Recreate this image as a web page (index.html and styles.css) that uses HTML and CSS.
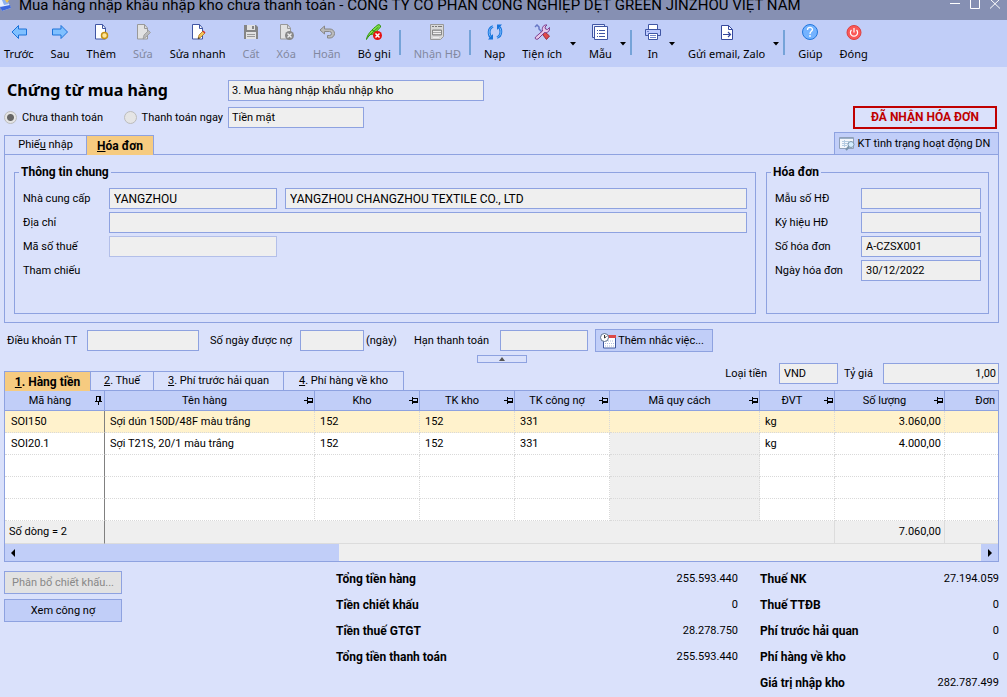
FILE: index.html
```html
<!DOCTYPE html>
<html lang="vi">
<head>
<meta charset="utf-8">
<title>Mua hàng nhập khẩu nhập kho chưa thanh toán</title>
<link rel="stylesheet" href="styles.css">
</head>
<body>
<svg class="defs" width="0" height="0" aria-hidden="true">
  <symbol id="pin" viewBox="0 0 9 9"><path d="M0 4.500h3M3.500 1v7M3.500 2.500h5M8.500 2v5M3.500 5.500h5M3.500 6.500h5" fill="none" stroke="#000"/></symbol>
  <symbol id="pin-down" viewBox="0 0 8 9"><path d="M3.500 6v3M0 5.500h7M1.500 0v5.500M1.500 .500h4M5.500 0v5.500M4.500 0v5.500" fill="none" stroke="#000"/></symbol>
  <symbol id="caret" viewBox="0 0 6 4"><path d="M0 0h6L3 3.500z"/></symbol>
</svg>

<header class="titlebar">
  <svg class="app-icon" width="14" height="12" viewBox="0 0 14 12"><path d="M0 0h7l4 8-9 3-2-5z" fill="#e9f0ff"/><path d="M0 7l2 4 9-3-1-3z" fill="#3e68dd"/><path d="M2 0h5l2 4-5 1z" fill="#8eb0ef"/><path d="M5 0h4l-2 3z" fill="#f0c24c"/></svg>
  <h1 class="window-title">Mua hàng nhập khẩu nhập kho chưa thanh toán - CÔNG TY CỔ PHẦN CÔNG NGHIỆP DỆT GREEN JINZHOU VIỆT NAM</h1>
  <div class="window-buttons">
    <button type="button" aria-label="Thu nhỏ"><svg width="10" height="10" viewBox="0 0 10 10"><path d="M0 3.500h10"/></svg></button>
    <button type="button" aria-label="Phóng to"><svg width="10" height="10" viewBox="0 0 10 10"><path d="M.5 0v8.500h9V0"/></svg></button>
    <button type="button" aria-label="Đóng cửa sổ"><svg width="10" height="10" viewBox="0 0 10 10"><path d="M0 -1l10 9.500M10 -1L0 8.500"/></svg></button>
  </div>
</header>

<nav class="toolbar" aria-label="Công cụ">
  <button type="button" class="tool"><svg width="16" height="16" viewBox="0 0 16 16"><path d="M1 8l6.500-6.500v3.500H15.500v6H7.500v3.500z" fill="#80c0ff" stroke="#1c72d8"/></svg><span>Trước</span></button>
  <button type="button" class="tool"><svg width="16" height="16" viewBox="0 0 16 16"><path d="M15.500 8L9 1.500v3.500H.5v6H9v3.500z" fill="#80c0ff" stroke="#1c72d8"/></svg><span>Sau</span></button>
  <button type="button" class="tool"><svg width="16" height="16" viewBox="0 0 16 16"><path d="M2.500 .500h7l3 3.500v11h-10z" fill="#fff" stroke="#4056a4"/><path d="M9.500 .500v4h3" fill="none" stroke="#4056a4"/><circle cx="11.500" cy="11.500" r="3" fill="#ffe69a" stroke="#c59116" stroke-width="1.500"/></svg><span>Thêm</span></button>
  <button type="button" class="tool" disabled><svg width="16" height="16" viewBox="0 0 16 16"><path d="M2.500 .500h7l3 3.500v11h-10z" fill="#e2e2e2" stroke="#999"/><path d="M9.500 .500v4h3" fill="none" stroke="#999"/><path d="M8 15l1-4 4.500-4.500 2 2L11 13z" fill="#bbb" stroke="#999" stroke-width=".8"/></svg><span>Sửa</span></button>
  <button type="button" class="tool"><svg width="16" height="16" viewBox="0 0 16 16"><path d="M2.500 .500h7l3 3.500v11h-10z" fill="#fff" stroke="#4056a4"/><path d="M9.500 .500v4h3" fill="none" stroke="#4056a4"/><path d="M8 15l1-4 4-4 2 2-4 4z" fill="#f4c65a" stroke="#aa7522" stroke-width=".8"/><path d="M12.500 7.500l1-1 2 2-1 1z" fill="#d32f2f"/><path d="M8 15l.5-2 1.500 1.500z" fill="#333"/></svg><span>Sửa nhanh</span></button>
  <button type="button" class="tool" disabled><svg width="16" height="16" viewBox="0 0 16 16"><path d="M1 1h12l2 2v12H1z" fill="#858585"/><path d="M4 1h8v5H4zM3 8h10v7H3z" fill="#e2e2e2"/><path d="M9 2h2v3H9z" fill="#858585"/><path d="M4 10.500h8M4 12.500h8" stroke="#999"/></svg><span>Cất</span></button>
  <button type="button" class="tool" disabled><svg width="16" height="16" viewBox="0 0 16 16"><path d="M2.500 .500h7l3 3.500v11h-10z" fill="#e2e2e2" stroke="#999"/><path d="M9.500 .500v4h3" fill="none" stroke="#999"/><circle cx="11.500" cy="11.500" r="4.500" fill="#888"/><path d="M9.500 9.500l4 4M13.500 9.500l-4 4" stroke="#eee" stroke-width="1.400"/></svg><span>Xóa</span></button>
  <button type="button" class="tool" disabled><svg width="16" height="16" viewBox="0 0 16 16"><path d="M5.500 2L1 6l4.500 4V7.500h5a2 2 0 0 1 0 4H8.500V14h2.500a4.500 4.500 0 0 0 0-9H5.500z" fill="#bbb" stroke="#888"/></svg><span>Hoãn</span></button>
  <button type="button" class="tool"><svg width="16" height="16" viewBox="0 0 16 16"><path d="M.5 15.500C1 11 5 6 12 .800c1.500-.5 3 .7 2.500 2.200L8 10l-4 .500-3 4z" fill="#83e34c" stroke="#35920f"/><path d="M3 12L12.500 3M6 6l4 2" stroke="#2f8c12" fill="none"/><circle cx="11.500" cy="11.500" r="4.500" fill="#e51313"/><path d="M9.500 9.500l4 4M13.500 9.500l-4 4" stroke="#fff" stroke-width="1.500"/></svg><span>Bỏ ghi</span></button>
  <span class="divider"></span>
  <button type="button" class="tool" disabled><svg width="16" height="16" viewBox="0 0 16 16"><path d="M1.500 .500h13v12l-3 3h-10z" fill="#d8d8d8" stroke="#999"/><path d="M3 2.500h2M6 2.500h2M9 2.500h4" stroke="#777"/><path d="M3.500 6h9v5h-9z" fill="#aaa" stroke="#888"/><path d="M4 7.500h8M4 9.500h8M4 13.500h6" stroke="#eee"/></svg><span>Nhận HĐ</span></button>
  <span class="divider"></span>
  <button type="button" class="tool"><svg width="16" height="16" viewBox="0 0 16 16"><g fill="none" stroke="#1673db" stroke-width="2.800"><path d="M6 2.500C1 4 1 12 5 13.500M10 13.500C15 12 15 4 11 2.500"/></g><g fill="none" stroke="#7ebdff" stroke-width="1"><path d="M6 2.500C1 4 1 12 5 13.500M10 13.500C15 12 15 4 11 2.500"/></g><path d="M6 10v5.500H1zM10 6V.500h5z" fill="#1673db"/></svg><span>Nạp</span></button>
  <button type="button" class="tool"><svg width="16" height="16" viewBox="0 0 16 16"><path d="M1 3l2-2 2 2v2l4 4" fill="none" stroke="#6676c4" stroke-width="1.500"/><path d="M9 9l2-1 4.500 4-3 3.500L9 11z" fill="#e04a4a" stroke="#983040"/><path d="M1.500 13l7-6C7.500 3 10 .5 13 1l-2 2 .5 2 2 .5 2-2c.5 4-2 5.500-5 5L4 15c-2 1-3.500-.5-2.500-2z" fill="#e8c9ea" stroke="#7c3e8e"/></svg><span>Tiện ích</span></button>
  <button type="button" class="drop" aria-label="Thêm tiện ích"><svg width="6" height="4"><use href="#caret"/></svg></button>
  <button type="button" class="tool"><svg width="16" height="16" viewBox="0 0 16 16"><path d="M.5 .500h12v13H.5z" fill="#e9eeff" stroke="#4056a4"/><path d="M2.500 2.500h13v13h-13z" fill="#fff" stroke="#4056a4"/><path d="M5 6.500h1M5 9.500h1M5 12.500h1M7 6.500h6M7 9.500h6M7 12.500h6" stroke="#4056a4"/></svg><span>Mẫu</span></button>
  <button type="button" class="drop" aria-label="Chọn mẫu"><svg width="6" height="4"><use href="#caret"/></svg></button>
  <span class="divider"></span>
  <button type="button" class="tool"><svg width="16" height="16" viewBox="0 0 16 16"><path d="M3.500 .500h9v5h-9z" fill="#fff" stroke="#4056a4"/><path d="M.5 5.500h15v6H.5z" fill="#bdcaff" stroke="#4056a4"/><path d="M3.500 9.500h9v6h-9z" fill="#fff" stroke="#4056a4"/><path d="M5 11.500h6M5 13.500h6M2 7.500h2" stroke="#7386ca"/></svg><span>In</span></button>
  <button type="button" class="drop" aria-label="Tùy chọn in"><svg width="6" height="4"><use href="#caret"/></svg></button>
  <button type="button" class="tool"><svg width="16" height="16" viewBox="0 0 16 16"><path d="M2.500 1.500h7l4 4v10h-11z" fill="#fff" stroke="#35489c"/><path d="M9.500 1.500v4h4" fill="none" stroke="#35489c"/><path d="M4 10.500h8M9 8l2.500 2.500L9 13" fill="none" stroke="#35489c" stroke-width="1.200"/></svg><span>Gửi email, Zalo</span></button>
  <button type="button" class="drop" aria-label="Tùy chọn gửi"><svg width="6" height="4"><use href="#caret"/></svg></button>
  <span class="divider"></span>
  <button type="button" class="tool"><svg width="16" height="16" viewBox="0 0 16 16"><circle cx="8" cy="8" r="7.500" fill="#74b3ff" stroke="#2277dc"/><path d="M5.500 6C5.500 2.500 10.500 2.800 10.500 5.500 10.500 7.300 8 7.500 8 10" fill="none" stroke="#fff" stroke-width="1.300"/><circle cx="8" cy="12" r=".9" fill="#fff"/></svg><span>Giúp</span></button>
  <button type="button" class="tool"><svg width="16" height="16" viewBox="0 0 16 16"><circle cx="8" cy="8.500" r="7" fill="#fa5959" stroke="#dc4141"/><path d="M5.500 6a3.600 3.600 0 1 0 5 0M8 4v4.500" fill="none" stroke="#fff" stroke-width="1.200"/></svg><span>Đóng</span></button>
</nav>

<main class="page">
  <div class="head-row head-type">
    <h2>Chứng từ mua hàng</h2>
    <input class="field type-field" aria-label="Loại chứng từ" value="3. Mua hàng nhập khẩu nhập kho" readonly>
  </div>
  <div class="head-row head-pay">
    <div class="radios">
      <label class="radio"><input type="radio" name="pay" checked disabled>Chưa thanh toán</label>
      <label class="radio"><input type="radio" name="pay" disabled>Thanh toán ngay</label>
    </div>
    <input class="field pay-field" aria-label="Hình thức thanh toán" value="Tiền mặt" readonly>
    <strong class="stamp">ĐÃ NHẬN HÓA ĐƠN</strong>
  </div>

  <div class="panel-head">
    <div class="tabs" role="tablist">
      <button type="button" class="tab tab-receipt" role="tab">Phiế<u>u</u> nhập</button>
      <button type="button" class="tab tab-invoice active" role="tab" aria-selected="true"><u>H</u>óa đơn</button>
    </div>
    <button type="button" class="btn btn-check"><svg width="17" height="15" viewBox="0 0 17 15"><path d="M.5 1.500h14v11H.5z" fill="#f4f7fc" stroke="#8fa0b8"/><path d="M1 2.500h13" stroke="#9cb0c6"/><path d="M3 5.500h7M3 7.500h6M3 9.500h5M5.500 4v7" stroke="#b5cbe2"/><circle cx="12" cy="8.500" r="3" fill="#d3ecff" stroke="#7893ab"/><path d="M10 10.500l-3 3.500" stroke="#7893ab" stroke-width="2"/></svg>KT tình trạng hoạt động DN</button>
  </div>

  <section class="panel">
    <fieldset class="group group-main">
      <legend>Thông tin chung</legend>
      <div class="form form-main">
        <label for="sup">Nhà cung cấp</label>
        <div class="pair"><input class="field name" id="sup" value="YANGZHOU" readonly><input class="field name" aria-label="Tên nhà cung cấp" value="YANGZHOU CHANGZHOU TEXTILE CO., LTD" readonly></div>
        <label for="addr">Địa chỉ</label><input class="field" id="addr" readonly>
        <label for="tax">Mã số thuế</label>
        <div class="pair"><input class="field light" id="tax" readonly></div>
        <span>Tham chiếu</span>
      </div>
    </fieldset>
    <fieldset class="group group-invoice">
      <legend>Hóa đơn</legend>
      <div class="form form-invoice">
        <label for="tpl">Mẫu số HĐ</label><input class="field" id="tpl" readonly>
        <label for="sign">Ký hiệu HĐ</label><input class="field" id="sign" readonly>
        <label for="no">Số hóa đơn</label><input class="field" id="no" value="A-CZSX001" readonly>
        <label for="date">Ngày hóa đơn</label><input class="field" id="date" value="30/12/2022" readonly>
      </div>
    </fieldset>
  </section>

  <div class="terms">
    <label for="term">Điều khoản TT</label><input class="field term-field" id="term" readonly>
    <label for="days" class="days-label">Số ngày được nợ</label><input class="field days-field" id="days" readonly>
    <span class="unit">(ngày)</span>
    <label for="due" class="due-label">Hạn thanh toán</label><input class="field due-field" id="due" readonly>
    <button type="button" class="btn btn-remind"><svg width="16" height="16" viewBox="0 0 16 16"><path d="M3.500 2.500h12v12.500h-12z" fill="#fff" stroke="#3f589f"/><path d="M6 2h10v3H6z" fill="#dc4a4a"/><path d="M6 8h8M5 10.500h9M5 13h9" stroke="#aebce0" stroke-dasharray="1 1"/><circle cx="4.500" cy="4.500" r="4" fill="#fff" stroke="#5b7190"/><path d="M4.500 2v3l2-1.500" fill="none" stroke="#333"/></svg>Thêm nhắc việc...</button>
  </div>
  <button type="button" class="collapse" aria-label="Thu gọn"><svg width="6" height="4" viewBox="0 0 6 4"><path d="M0 4h6L3 0z" fill="#555"/></svg></button>

  <div class="grid-head">
    <div class="tabs" role="tablist">
      <button type="button" class="tab t1 active" role="tab" aria-selected="true"><u>1</u>. Hàng tiền</button>
      <button type="button" class="tab t2" role="tab"><u>2</u>. Thuế</button>
      <button type="button" class="tab t3" role="tab"><u>3</u>. Phí trước hải quan</button>
      <button type="button" class="tab t4" role="tab"><u>4</u>. Phí hàng về kho</button>
    </div>
    <div class="currency">
      <label for="cur">Loại tiền</label><input class="field cur-field" id="cur" value="VND" readonly>
      <label for="rate" class="rate-label">Tỷ giá</label><input class="field rate-field" id="rate" value="1,00" readonly>
    </div>
  </div>

  <div class="grid">
    <table>
      <colgroup><col class="c-code"><col class="c-name"><col class="c-wh"><col class="c-acc"><col class="c-acc"><col class="c-spec"><col class="c-unit"><col class="c-qty"><col></colgroup>
      <thead><tr>
        <th><div><span>Mã hàng</span><svg width="8" height="9"><use href="#pin-down"/></svg></div></th>
        <th><div><span>Tên hàng</span><svg width="9" height="9"><use href="#pin"/></svg></div></th>
        <th><div><span>Kho</span><svg width="9" height="9"><use href="#pin"/></svg></div></th>
        <th><div><span>TK kho</span><svg width="9" height="9"><use href="#pin"/></svg></div></th>
        <th><div><span>TK công nợ</span><svg width="9" height="9"><use href="#pin"/></svg></div></th>
        <th><div><span>Mã quy cách</span><svg width="9" height="9"><use href="#pin"/></svg></div></th>
        <th><div><span>ĐVT</span><svg width="9" height="9"><use href="#pin"/></svg></div></th>
        <th><div><span>Số lượng</span><svg width="9" height="9"><use href="#pin"/></svg></div></th>
        <th class="num">Đơn</th>
      </tr></thead>
      <tbody>
        <tr class="selected"><td>SOI150</td><td>Sợi dún 150D/48F màu trắng</td><td>152</td><td>152</td><td>331</td><td></td><td>kg</td><td class="num">3.060,00</td><td></td></tr>
        <tr><td>SOI20.1</td><td>Sợi T21S, 20/1 màu trắng</td><td>152</td><td>152</td><td>331</td><td class="off"></td><td>kg</td><td class="num">4.000,00</td><td></td></tr>
        <tr><td></td><td></td><td></td><td></td><td></td><td class="off"></td><td></td><td></td><td></td></tr>
        <tr><td></td><td></td><td></td><td></td><td></td><td class="off"></td><td></td><td></td><td></td></tr>
        <tr><td></td><td></td><td></td><td></td><td></td><td class="off"></td><td></td><td></td><td></td></tr>
      </tbody>
      <tfoot><tr><td>Số dòng = 2</td><td colspan="6"></td><td class="num">7.060,00</td><td></td></tr></tfoot>
    </table>
    <div class="scroll">
      <button type="button" class="thumb" aria-label="Cuộn trái"><svg width="4" height="8" viewBox="0 0 4 8"><path d="M4 0v8L0 4z"/></svg></button>
      <button type="button" class="next" aria-label="Cuộn phải"><svg width="4" height="8" viewBox="0 0 4 8"><path d="M0 0v8l4-4z"/></svg></button>
    </div>
  </div>

  <div class="summary">
    <div class="actions">
      <button type="button" class="btn" disabled>Phân bổ chiết khấu...</button>
      <button type="button" class="btn">Xem công nợ</button>
    </div>
    <dl class="totals totals-a">
      <dt>Tổng tiền hàng</dt><dd>255.593.440</dd>
      <dt>Tiền chiết khấu</dt><dd>0</dd>
      <dt>Tiền thuế GTGT</dt><dd>28.278.750</dd>
      <dt>Tổng tiền thanh toán</dt><dd>255.593.440</dd>
    </dl>
    <dl class="totals totals-b">
      <dt>Thuế NK</dt><dd>27.194.059</dd>
      <dt>Thuế TTĐB</dt><dd>0</dd>
      <dt>Phí trước hải quan</dt><dd>0</dd>
      <dt>Phí hàng về kho</dt><dd>0</dd>
      <dt>Giá trị nhập kho</dt><dd>282.787.499</dd>
    </dl>
  </div>
</main>
</body>
</html>
```
FILE: styles.css
```css
* { box-sizing: border-box; }
:root { --line: #8ea2e0; --bar: #c1cef8; --page: #dae1fb; --field: #efefef; --tab: #f6cb80; --ui: "Noto Sans", "Open Sans", sans-serif; }
body { margin: 0; background: var(--page); color: #000; font: 11px/14px Roboto, "Liberation Sans", sans-serif; }
button, input { font: inherit; color: inherit; margin: 0; }
button { padding: 0; border: 0; background: none; white-space: nowrap; }
svg { display: block; flex: none; }
.defs { position: absolute; }

.titlebar { display: flex; align-items: flex-start; height: 20px; padding-right: 7px; background: #8690b3; overflow: hidden; }
.app-icon { margin-right: 5px; }
.window-title { flex: 1; min-width: 0; margin: 0; font: 400 15px/10px Roboto, sans-serif; white-space: nowrap; }
.window-buttons { display: flex; gap: 10px; }
.window-buttons svg { fill: none; stroke: #fff; }

.toolbar { display: flex; align-items: flex-start; height: 47px; padding-top: 4px; background: var(--bar); font: 11px/20px var(--ui); }
.tool { display: flex; flex-direction: column; align-items: center; gap: 4px; padding: 0 8px 0 9px; }
.tool:first-child { padding-left: 4px; }
.tool:disabled { color: #8288a0; }
.drop { width: 10px; padding-top: 18px; }
.divider { width: 2px; height: 25px; margin: 6px 4px 0 0; background: #75a3d8; }

.page { padding: 13px 8px 7px 4px; }
.field { width: 100%; min-width: 0; height: 21px; padding: 0 4px; border: 1px solid var(--line); border-radius: 0; background: var(--field); }
.field.light { border-color: #b3bfe9; }
.head-row { display: flex; align-items: center; }
.head-type h2 { width: 224px; margin: 0; padding-left: 3px; font: 700 16px/21px var(--ui); white-space: nowrap; }
.head-type .field { padding: 0 3px; }
.type-field { width: 256px; }
.head-pay { height: 23px; margin: 5px 0 3px; }
.radios { display: flex; width: 224px; justify-content: space-between; padding-right: 5px; }
.radio { display: flex; align-items: center; gap: 5px; white-space: nowrap; }
.radio input { appearance: none; width: 13px; height: 13px; border: 1px solid #bcbcbc; border-radius: 50%; background: #e5e5e5; }
.radio input:checked { background: radial-gradient(circle, #666 0 3px, #e5e5e5 4px); }
.pay-field { width: 136px; padding: 0 3px; }
.stamp { width: 144px; height: 23px; margin: 0 2px 0 auto; border: 2px solid #c00000; color: #c00000; line-height: 19px; text-align: center; font-size: 12px; }

.panel-head { display: flex; justify-content: space-between; align-items: flex-end; }
.tabs { display: flex; margin-bottom: -1px; }
.tab { height: 20px; border: 1px solid var(--line); border-left: 0; }
.tab:first-child { border-left: 1px solid var(--line); }
.tab.active { background: var(--tab); border-bottom: 0; font-weight: 700; font-size: 12px; }
.tab-receipt { width: 83px; }
.tab-invoice { width: 67px; }
.btn { display: flex; align-items: center; justify-content: center; gap: 2px; height: 23px; border: 1px solid var(--line); background: var(--bar); }
.btn:disabled { background: #e2e2e2; color: #888; }
.btn-check { width: 165px; margin-bottom: -1px; padding-right: 4px; }

.panel { display: flex; gap: 10px; padding: 10px 9px 8px; border: 1px solid var(--line); }
.group { margin: 0; min-width: 0; height: 149px; padding: 0; border: 1px solid var(--line); }
.group-main { flex: 1; }
.group-invoice { width: 223px; }
.group legend { margin-left: 4px; padding: 0 2px; font-weight: 700; font-size: 12px; }
.form { display: grid; row-gap: 3px; grid-auto-rows: 21px; align-items: center; padding: 9px 8px 0; }
.form-main { grid-template-columns: 86px 1fr; }
.form-invoice { grid-template-columns: 86px 1fr; padding-right: 7px; }
.pair { display: grid; grid-template-columns: 168px 1fr; gap: 8px; }
.field.name { font-size: 12px; }

.terms { display: flex; align-items: center; height: 23px; margin-top: 6px; padding-left: 3px; white-space: nowrap; }
.terms label { width: 80px; }
.terms .term-field { width: 112px; }
.terms .days-label { width: 90px; margin-left: 11px; }
.terms .days-field { width: 64px; }
.terms .unit { width: 48px; padding-left: 2px; }
.terms .due-label { width: 86px; margin-left: 2px; }
.terms .due-field { width: 88px; }
.btn-remind { width: 118px; margin-left: 7px; padding-right: 4px; }
.collapse { display: flex; align-items: center; justify-content: center; width: 50px; height: 8px; margin: 3px auto 0; border: 1px solid var(--line); }

.grid-head { display: flex; justify-content: space-between; align-items: flex-end; height: 27px; }
.t1 { width: 87px; }
.t2 { width: 63px; }
.t3 { width: 130px; }
.t4 { width: 120px; }
.currency { display: flex; align-items: center; margin-bottom: 6px; white-space: nowrap; }
.cur-field { width: 59px; margin: 0 6px 0 12px; }
.rate-label { width: 31px; }
.rate-field { width: 116px; margin-left: 8px; padding: 0 2px; text-align: right; }

.grid { border: 1px solid var(--line); overflow: hidden; }
table { width: 100%; table-layout: fixed; border-collapse: separate; border-spacing: 0; background: #fff; }
.c-code { width: 100px; }
.c-name { width: 210px; }
.c-wh { width: 105px; }
.c-acc { width: 95px; }
.c-spec { width: 150px; }
.c-unit { width: 75px; }
.c-qty { width: 110px; }
th { height: 20px; padding: 0 1px 0 0; border-right: 1px solid var(--line); border-bottom: 1px solid var(--line); background: var(--bar); font-weight: 400; }
th div { display: flex; align-items: center; }
th span { flex: 1; }
td { height: 22px; padding: 0 5px; border-right: 1px dotted #d9d9d9; border-bottom: 1px dotted #d9d9d9; white-space: nowrap; }
td:first-child { border-right: 1px solid #808080; padding-left: 6px; }
th:last-child, td:last-child { border-right: 0; }
.num { text-align: right; padding-right: 3px; }
.selected td { background: #fff2cc; }
.off, tfoot td { background: #efefef; }
tfoot td { height: 23px; border-right: 1px solid #dcdcdc; border-bottom: 1px solid #dcdcdc; }
tfoot td:first-child { padding-left: 4px; }
.scroll { display: flex; justify-content: space-between; height: 17px; background: #efefef; }
.thumb { display: flex; align-items: center; width: 334px; padding-left: 6px; background: var(--bar); }
.next { display: flex; align-items: center; justify-content: center; width: 17px; background: var(--bar); }

.summary { display: flex; margin-top: 4px; }
.actions { display: flex; flex-direction: column; gap: 5px; width: 118px; padding-top: 5px; }
.totals { display: grid; grid-template-columns: auto 1fr; grid-auto-rows: 26px; align-items: center; align-content: start; margin: 0; }
.totals-a { flex: 1; margin: 0 22px 0 214px; }
.totals-b { width: 239px; }
dt { font-weight: 700; font-size: 12px; }
dd { margin: 0; text-align: right; }
```
